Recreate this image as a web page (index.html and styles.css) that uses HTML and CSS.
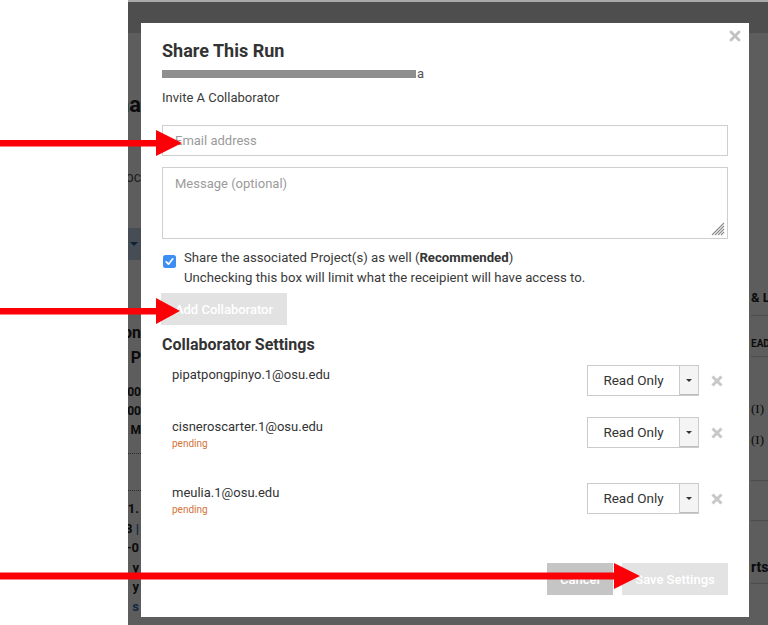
FILE: index.html
```html
<!DOCTYPE html>
<html>
<head>
<meta charset="utf-8">
<link rel="stylesheet" href="styles.css">
</head>
<body>
<div class="stage">
  <div class="screen">
    <div class="bg-page">
      <div class="bg-nav"></div>
      <div class="bg-body">
        <div class="bg-left">
          <div class="frag f-head"><span>Illumina</span></div>
          <div class="frag f-sub"><span>Assoc</span></div>
          <div class="frag f-bar"><span class="caret-bg"></span></div>
          <div class="frag f-big f-on"><span>Information</span></div>
          <div class="frag f-big f-p"><span>P</span></div>
          <div class="frag f-sm f-first"><span>2019-01-10 00</span></div>
          <div class="frag f-sm"><span>2019-01-10 00</span></div>
          <div class="frag f-sm"><span>M</span></div>
          <div class="frag f-dot f-dot1"></div>
          <div class="frag f-dot f-dot2"></div>
          <div class="frag f-mid f-mfirst"><span>v1.</span></div>
          <div class="frag f-mid"><span>8 <b class="blue">|</b></span></div>
          <div class="frag f-mid"><span>2019-0</span></div>
          <div class="frag f-mid"><span>y</span></div>
          <div class="frag f-mid"><span>y</span></div>
          <div class="frag f-mid"><span class="blue">s</span></div>
        </div>
        <div class="bg-center"></div>
        <div class="bg-right">
          <div class="rfrag r-l"><span>&amp; Lanes</span></div>
          <div class="rline r-line1"></div>
          <div class="rfrag r-ead"><span>EAD</span></div>
          <div class="rline"></div>
          <div class="rfrag r-i1"><span>(I)</span></div>
          <div class="rfrag r-i2"><span>(I)</span></div>
          <div class="rline r-line3"></div>
          <div class="rline r-line4"></div>
          <div class="rfrag r-rts"><span>rts</span></div>
          <div class="rline r-line5"></div>
        </div>
      </div>
    </div>
    <div class="overlay"></div>

    <div class="modal">
      <button class="close" aria-label="Close">
        <svg width="12" height="12" viewBox="0 0 12 12"><path d="M2 2 L10 10 M10 2 L2 10" stroke="#c2c2c2" stroke-width="2.8" stroke-linecap="round"/></svg>
      </button>
      <h2 class="title">Share This Run</h2>
      <div class="run-id"><span class="redact"></span><span class="run-tail">a</span></div>
      <div class="invite">Invite A Collaborator</div>
      <div class="field email"><span class="ph">Email address</span></div>
      <div class="field message">
        <span class="ph">Message (optional)</span>
        <svg class="grip" width="15" height="15" viewBox="0 0 15 15"><path d="M14 2 L2 14 M14 5 L5 14 M14 8 L8 14 M14 11 L11 14" stroke="#8c8c8c" stroke-width="1.1"/></svg>
      </div>
      <div class="check-row">
        <span class="checkbox">
          <svg width="13" height="13" viewBox="0 0 13 13"><rect x="0" y="0" width="13" height="13" rx="2.5" fill="#3d8ef2"/><path d="M3.2 6.8 L5.5 9.2 L9.8 3.8" stroke="#fff" stroke-width="1.7" fill="none" stroke-linecap="round" stroke-linejoin="round"/></svg>
        </span>
        <div class="check-text">
          <div>Share the associated Project(s) as well (<b>Recommended</b>)</div>
          <div>Unchecking this box will limit what the receipient will have access to.</div>
        </div>
      </div>
      <button class="btn btn-add">Add Collaborator</button>
      <h3 class="section">Collaborator Settings</h3>

      <div class="collab">
        <div class="who"><div class="mail">pipatpongpinyo.1@osu.edu</div></div>
        <div class="select"><span class="sel-text">Read Only</span><span class="sel-arrow"></span></div>
        <span class="remove"><svg width="12" height="12" viewBox="0 0 12 12"><path d="M1.5 1.5 L10.5 10.5 M10.5 1.5 L1.5 10.5" stroke="#c8c8c8" stroke-width="3"/></svg></span>
      </div>
      <div class="collab has-pending">
        <div class="who"><div class="mail">cisneroscarter.1@osu.edu</div><div class="pending">pending</div></div>
        <div class="select"><span class="sel-text">Read Only</span><span class="sel-arrow"></span></div>
        <span class="remove"><svg width="12" height="12" viewBox="0 0 12 12"><path d="M1.5 1.5 L10.5 10.5 M10.5 1.5 L1.5 10.5" stroke="#c8c8c8" stroke-width="3"/></svg></span>
      </div>
      <div class="collab has-pending">
        <div class="who"><div class="mail">meulia.1@osu.edu</div><div class="pending">pending</div></div>
        <div class="select"><span class="sel-text">Read Only</span><span class="sel-arrow"></span></div>
        <span class="remove"><svg width="12" height="12" viewBox="0 0 12 12"><path d="M1.5 1.5 L10.5 10.5 M10.5 1.5 L1.5 10.5" stroke="#c8c8c8" stroke-width="3"/></svg></span>
      </div>

      <div class="footer">
        <button class="btn btn-cancel">Cancel</button>
        <button class="btn btn-save">Save Settings</button>
      </div>
    </div>
  </div>

  <svg class="arrows" width="768" height="625" viewBox="0 0 768 625">
    <rect x="0" y="140" width="160" height="6.5" fill="#fb0007"/>
    <polygon points="156,130 182,143 156,156" fill="#fb0007"/>
    <rect x="0" y="308" width="160" height="6.5" fill="#fb0007"/>
    <polygon points="156,298 180,311 156,324" fill="#fb0007"/>
    <rect x="0" y="572.5" width="620" height="7" fill="#fb0007"/>
    <polygon points="614,563 640,576 614,589" fill="#fb0007"/>
  </svg>
</div>
</body>
</html>
```

FILE: styles.css
```css
* { box-sizing: border-box; }
html, body { margin: 0; padding: 0; }
body {
  background: #fff;
  font-family: Roboto, "Liberation Sans", sans-serif;
  width: 768px;
  height: 625px;
  overflow: hidden;
}
.stage { position: relative; width: 768px; height: 625px; }
.screen {
  position: relative;
  margin-left: 128px;
  width: 640px;
  height: 625px;
  border-top: 2px solid #a9a9a9;
  overflow: hidden;
  background: #fff;
}

/* background app (dimmed) */
.bg-page { display: flex; flex-direction: column; height: 100%; }
.bg-nav { height: 31px; background: #d6d6d6; flex: none; }
.bg-body { display: flex; flex: 1; }
.bg-left { width: 13px; flex: none; display: flex; flex-direction: column; }
.bg-center { flex: 1; }
.bg-right { width: 19px; flex: none; display: flex; flex-direction: column; padding-left: 2px; }

.frag {
  display: flex;
  justify-content: flex-end;
  white-space: nowrap;
  overflow: hidden;
  color: #222;
  flex: none;
}
.f-head { margin-top: 59px; height: 26px; line-height: 26px; font-size: 22px; font-weight: 700; }
.f-sub { margin-top: 50px; height: 18px; line-height: 18px; font-size: 14px; color: #555; }
.f-bar { margin-top: 42px; height: 32px; background: #bfd3e6; align-items: center; padding-right: 3px; }
.caret-bg { width: 0; height: 0; border-left: 4px solid transparent; border-right: 4px solid transparent; border-top: 4px solid #2a5d8f; }
.f-big { height: 20px; line-height: 20px; font-size: 16px; font-weight: 700; }
.f-on { margin-top: 63px; }
.f-p { margin-top: 5px; }
.f-sm { height: 19px; line-height: 19px; font-size: 12px; font-weight: 700; }
.f-first { margin-top: 15px; }
.f-dot { height: 1px; border-top: 1px dotted #777; }
.f-dot1 { margin-top: 13px; }
.f-dot2 { margin-top: 36px; }
.f-mid { height: 19.5px; line-height: 19.5px; font-size: 13px; font-weight: 700; padding-right: 2px; }
.f-mfirst { margin-top: 8px; }
.blue { color: #2f6db3; }

.rfrag { white-space: nowrap; overflow: hidden; color: #222; font-weight: 700; flex: none; }
.r-l { margin-top: 255px; height: 20px; line-height: 20px; font-size: 13px; }
.rline { height: 1px; background: #cfcfcf; flex: none; }
.r-line1 { margin-top: 7px; }
.r-ead { margin-top: 20px; height: 16px; line-height: 16px; font-size: 10px; }
.r-ead + .rline { margin-top: 4px; }
.r-i1 { margin-top: 42px; height: 20px; line-height: 20px; font-size: 13px; font-weight: 400; font-family: "Liberation Serif", serif; }
.r-i2 { margin-top: 11px; height: 20px; line-height: 20px; font-size: 13px; font-weight: 400; font-family: "Liberation Serif", serif; }
.r-line3 { margin-top: 30px; }
.r-line4 { margin-top: 39px; }
.r-rts { margin-top: 36px; height: 20px; line-height: 20px; font-size: 14px; }
.r-line5 { margin-top: 6px; }

.overlay {
  position: absolute;
  inset: 0;
  background: rgba(0, 0, 0, 0.635);
}

/* modal */
.modal {
  position: absolute;
  left: 13px;
  top: 21px;
  width: 608px;
  height: 594px;
  background: #fff;
  padding: 17px 21px 0 21px;
  color: #333;
  font-size: 13px;
}
.close {
  position: absolute;
  right: 8px;
  top: 7px;
  width: 12px;
  height: 12px;
  padding: 0;
  border: 0;
  background: none;
  display: flex;
}
.title { margin: 0; font-size: 18px; line-height: 22px; font-weight: 700; color: #333; }
.run-id { margin-top: 4px; height: 16px; display: flex; align-items: center; }
.redact {
  display: block;
  width: 254px;
  height: 8px;
  background: #8e8e8e;
  filter: blur(0.7px);
}
.run-tail { font-size: 13px; color: #555; line-height: 16px; margin-left: 1px; }
.invite { margin-top: 7px; line-height: 18px; font-size: 13px; color: #3a3a3a; }

.field {
  position: relative;
  border: 1px solid #cfcfcf;
  background: #fff;
  padding: 0 12px;
}
.ph { color: #9b9b9b; font-size: 13px; }
.email { margin-top: 18px; height: 31px; display: flex; align-items: center; }
.message { margin-top: 11px; height: 72px; padding-top: 8px; line-height: 16px; }
.grip { position: absolute; right: 2px; bottom: 2px; }

.check-row { margin-top: 9px; display: flex; align-items: flex-start; }
.checkbox { width: 13px; height: 13px; margin-top: 7px; margin-left: 1px; display: flex; flex: none; }
.check-text { margin-left: 8px; line-height: 20px; font-size: 13.2px; color: #3a3a3a; }
.check-text b { font-weight: 700; color: #333; }

.btn {
  border: 0;
  color: #fff;
  font-family: Roboto, "Liberation Sans", sans-serif;
  font-size: 13px;
  font-weight: 500;
  height: 32px;
  padding: 0;
}
.btn-add { display: block; margin-top: 5px; margin-left: -1px; width: 126px; background: #e2e2e2; }
.section { margin: 10px 0 0 0; font-size: 16px; line-height: 20px; font-weight: 700; color: #333; }

.collab { display: flex; align-items: flex-start; margin-top: 21px; padding-right: 5px; }
.section + .collab { margin-top: 10px; }
.who { flex: 1; padding-left: 10px; padding-top: 1px; }
.mail { line-height: 18px; font-size: 13px; color: #333; }
.pending { line-height: 16px; font-size: 10px; color: #d4733a; margin-bottom: 10px; }
.select {
  width: 112px;
  height: 31px;
  border: 1px solid #cbcbcb;
  display: flex;
  background: #fff;
}
.sel-text { flex: 1; display: flex; align-items: center; justify-content: center; font-size: 13.5px; color: #333; padding-bottom: 1px; }
.sel-arrow {
  width: 19px;
  background: #f4f4f4;
  border-left: 1px solid #cbcbcb;
  box-shadow: inset 0 -1px 0 #bdbdbd;
  display: flex;
  align-items: center;
  justify-content: center;
}
.sel-arrow::after {
  content: "";
  width: 0; height: 0;
  border-left: 3px solid transparent;
  border-right: 3px solid transparent;
  border-top: 3px solid #333;
}
.remove { width: 12px; height: 12px; margin-left: 12px; margin-top: 10px; display: flex; }

.footer { margin-top: 35px; display: flex; justify-content: flex-end; gap: 9px; }
.btn-cancel { width: 66px; background: #c5c5c5; }
.btn-save { width: 106px; background: #e3e3e3; }

.arrows { position: absolute; left: 0; top: 0; pointer-events: none; }
```
